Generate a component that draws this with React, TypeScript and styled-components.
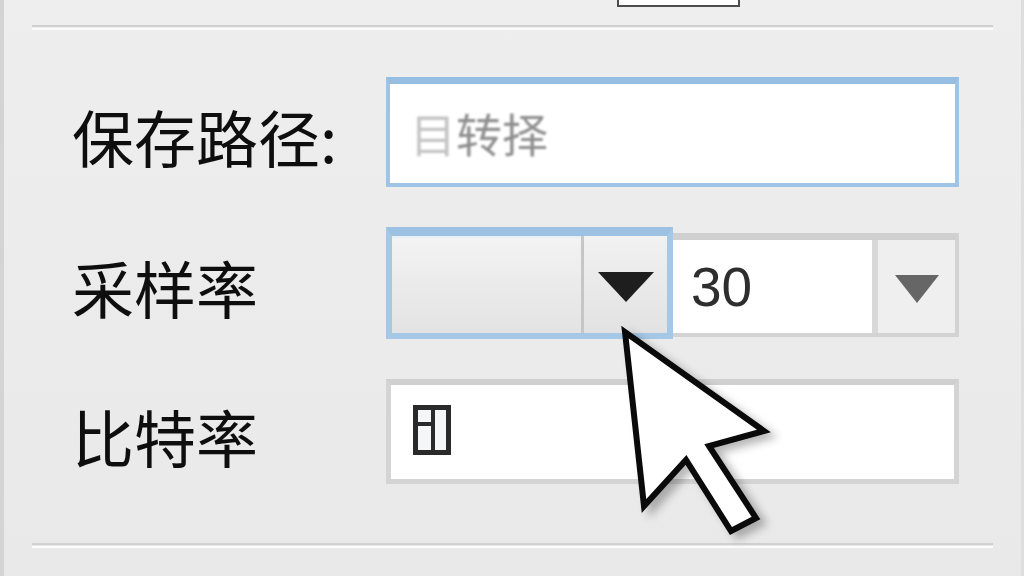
import React from "react";
import styled, { createGlobalStyle } from "styled-components";

const GlobalStyle = createGlobalStyle`
  html, body {
    margin: 0;
    padding: 0;
    background: #ebebeb;
  }
  * {
    box-sizing: border-box;
  }
`;

const Page = styled.div`
  position: relative;
  width: 1024px;
  height: 576px;
  overflow: hidden;
  background: linear-gradient(#eeeeee, #e9e9e9);
  border-left: 4px solid #d4d4d4;
  border-right: 3px solid #dedede;
  font-family: "Noto Sans CJK SC", "Noto Sans", sans-serif;
`;

const TopBar = styled.div`
  height: 25px;
  padding-left: 613px;
`;

const ButtonStub = styled.div`
  width: 123px;
  height: 7px;
  background: #fdfdfd;
  border: 2px solid #4c4c4c;
  border-top: none;
`;

const Separator = styled.div<{ $top?: number }>`
  height: 2px;
  margin: ${({ $top }) => $top ?? 0}px 28px 0 28px;
  background: #d0d0d0;
  box-shadow: 0 3px 0 #fbfbfb;
`;

const Form = styled.div`
  display: grid;
  grid-template-columns: 314px 573px;
  grid-template-rows: 110px 112px 105px;
  row-gap: 40px;
  padding: 50px 0 0 68px;
  align-items: center;
`;

const Label = styled.div`
  font-size: 62px;
  line-height: 1;
  padding-top: 8px;
  color: #0e0e0e;
  white-space: nowrap;
`;

const TextBox = styled.div<{ $focused?: boolean }>`
  height: 100%;
  display: flex;
  align-items: center;
  background: #ffffff;
  border: ${({ $focused }) => ($focused ? "4px" : "5px")} solid
    ${({ $focused }) => ($focused ? "#9fc4e6" : "#d4d4d4")};
  border-top-width: ${({ $focused }) => ($focused ? "7px" : "6px")};
  border-top-color: ${({ $focused }) => ($focused ? "#96bee2" : "#d0d0d0")};
  padding-left: 20px;
`;

const FadedText = styled.span`
  font-size: 46px;
  line-height: 1;
  color: #8e8e8e;
  filter: blur(0.8px);
  margin-top: -4px;
  & > b {
    font-weight: 400;
    color: #c4c4c4;
  }
`;

const ComboRow = styled.div`
  height: 100%;
  display: flex;
`;

const Combo = styled.div<{ $focused?: boolean }>`
  display: flex;
  height: ${({ $focused }) => ($focused ? "112px" : "104px")};
  margin-top: ${({ $focused }) => ($focused ? "0" : "6px")};
  width: ${({ $focused }) => ($focused ? "287px" : "286px")};
  border: ${({ $focused }) => ($focused ? "6px" : "4px")} solid
    ${({ $focused }) => ($focused ? "#a6c8e7" : "#d3d3d3")};
  border-top-width: ${({ $focused }) => ($focused ? "9px" : "7px")};
  border-top-color: ${({ $focused }) => ($focused ? "#9cc1e3" : "#d0d0d0")};
  border-left-width: ${({ $focused }) => ($focused ? "6px" : "0")};
  background: ${({ $focused }) =>
    $focused ? "linear-gradient(#f3f3f3, #e3e3e3)" : "#ffffff"};
  box-shadow: ${({ $focused }) =>
    $focused ? "inset 0 2px 0 #e6eef6" : "none"};
`;

const ComboField = styled.div<{ $width: number }>`
  width: ${({ $width }) => $width}px;
  display: flex;
  align-items: center;
  padding-left: 18px;
  font-family: "Liberation Sans", Arial, sans-serif;
  font-size: 55px;
  color: #2e2e2e;
`;

const ComboButton = styled.div<{ $dark?: boolean }>`
  flex: 1;
  display: flex;
  align-items: center;
  justify-content: center;
  border-left: ${({ $dark }) => ($dark ? "3px solid #c6c6c6" : "6px solid #d8d8d8")};
  background: ${({ $dark }) =>
    $dark ? "linear-gradient(#f1f1f1, #e2e2e2)" : "#efefef"};
  padding-top: 4px;
`;

const Arrow = styled.div<{ $dark?: boolean }>`
  width: 0;
  height: 0;
  border-left: ${({ $dark }) => ($dark ? 28 : 22)}px solid transparent;
  border-right: ${({ $dark }) => ($dark ? 28 : 22)}px solid transparent;
  border-top: ${({ $dark }) => ($dark ? 30 : 28)}px solid
    ${({ $dark }) => ($dark ? "#1e1e1e" : "#666666")};
`;

const IconBox = styled.svg`
  width: 38px;
  height: 50px;
  margin-left: 2px;
  margin-top: -4px;
`;

const Pointer = styled.svg`
  position: absolute;
  left: 596px;
  top: 316px;
  width: 180px;
  height: 230px;
  filter: drop-shadow(7px 5px 4px rgba(0, 0, 0, 0.28));
`;

const PanelIcon = () => (
  <IconBox viewBox="0 0 38 50">
    <rect x="2.5" y="2.5" width="33" height="45" fill="#f4f6f8" stroke="#2a2a2a" strokeWidth="5" />
    <line x1="20" y1="2" x2="20" y2="48" stroke="#2a2a2a" strokeWidth="4" />
    <line x1="2" y1="19" x2="20" y2="19" stroke="#2a2a2a" strokeWidth="4" />
  </IconBox>
);

const Cursor = () => (
  <Pointer viewBox="-4 -2 180 230">
    <path
      d="M21 14 L40 188 L82 142 L127 213 L152 200 L105 128 L160 113 Z"
      fill="#ffffff"
      stroke="#0a0a0a"
      strokeWidth="6"
      strokeLinejoin="miter"
    />
  </Pointer>
);

export default function App() {
  return (
    <>
      <GlobalStyle />
      <Page>
        <TopBar>
          <ButtonStub />
        </TopBar>
        <Separator />
        <Form>
          <Label>保存路径:</Label>
          <TextBox $focused>
            <FadedText>
              <b>目</b>转择
            </FadedText>
          </TextBox>

          <Label>采样率</Label>
          <ComboRow>
            <Combo $focused>
              <ComboField $width={189} />
              <ComboButton $dark>
                <Arrow $dark />
              </ComboButton>
            </Combo>
            <Combo>
              <ComboField $width={199}>30</ComboField>
              <ComboButton>
                <Arrow />
              </ComboButton>
            </Combo>
          </ComboRow>

          <Label>比特率</Label>
          <TextBox>
            <PanelIcon />
          </TextBox>
        </Form>
        <Separator $top={59} />
        <Cursor />
      </Page>
    </>
  );
}
